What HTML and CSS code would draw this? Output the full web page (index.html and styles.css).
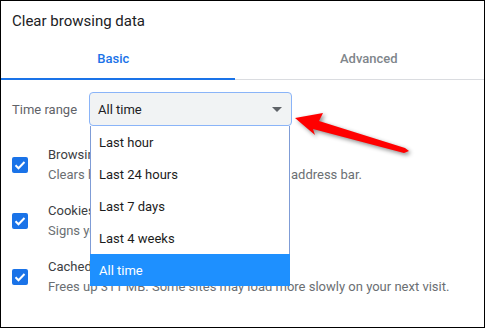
FILE: index.html
```html
<!DOCTYPE html>
<html lang="en">

<head>
    <meta charset="utf-8">
    <meta name="viewport" content="width=device-width, initial-scale=1.0">
    <title>Clear browsing data</title>
    <link rel="stylesheet" href="styles.css">
</head>

<body>

    <div class="dialog">
        <h1 class="titel">Clear browsing data</h1>

        <nav class="faner">
            <div class="fane valgt">Basic</div>
            <div class="fane anden">Advanced</div>
        </nav>

        <section class="indhold">
            <div class="tidsrum">
                <span class="etiket">Time range</span>
                <div class="vaelger">
                    <div class="felt">
                        <span>All time</span>
                        <span class="pil"></span>
                    </div>
                    <ul class="liste">
                        <li>Last hour</li>
                        <li>Last 24 hours</li>
                        <li>Last 7 days</li>
                        <li>Last 4 weeks</li>
                        <li class="markeret">All time</li>
                    </ul>
                </div>
            </div>

            <div class="raekke">
                <span class="boks"><svg viewBox="0 0 16 16" width="16" height="16"><path d="M3.5 8.2l3 3 6-6.2" fill="none" stroke="#fff" stroke-width="2"/></svg></span>
                <div class="tekst">
                    <div class="navn">Browsing history</div>
                    <div class="info">Clears history and autocompletions in the address bar.</div>
                </div>
            </div>

            <div class="raekke">
                <span class="boks"><svg viewBox="0 0 16 16" width="16" height="16"><path d="M3.5 8.2l3 3 6-6.2" fill="none" stroke="#fff" stroke-width="2"/></svg></span>
                <div class="tekst">
                    <div class="navn">Cookies and other site data</div>
                    <div class="info">Signs you out of most sites.</div>
                </div>
            </div>

            <div class="raekke">
                <span class="boks"><svg viewBox="0 0 16 16" width="16" height="16"><path d="M3.5 8.2l3 3 6-6.2" fill="none" stroke="#fff" stroke-width="2"/></svg></span>
                <div class="tekst">
                    <div class="navn">Cached images and files</div>
                    <div class="info">Frees up 311 MB. Some sites may load more slowly on your next visit.</div>
                </div>
            </div>
        </section>
    </div>

    <!-- rød pil oven på skærmbilledet -->
    <svg class="markering" width="489" height="329" viewBox="0 0 489 329">
        <polygon points="295,118 323,113 319,121 405,148 409,151 404,153 313,129 315,135" fill="#ff0000"/>
    </svg>

</body>

</html>
```

FILE: styles.css
```css
body {
    margin: 0;
    padding: 0;
    background-color: white;
    font-family: Roboto, "Liberation Sans", sans-serif;
}

.dialog {
    width: 485px;
    height: 328px;
    box-sizing: border-box;
    border: 1px solid black;
    overflow: hidden;
}

.titel {
    margin: 0;
    height: 39px;
    box-sizing: border-box;
    padding: 10px 0 0 11px;
    font-size: 15px;
    font-weight: normal;
    line-height: 20px;
    color: #202124;
}

.faner {
    display: flex;
    border-bottom: 1px solid #dadce0;
}

.fane {
    height: 38px;
    line-height: 38px;
    font-size: 13px;
    font-weight: 500;
    text-align: center;
    border-bottom: 2px solid transparent;
    margin-bottom: -1px;
    box-sizing: content-box;
}

.valgt {
    width: 225px;
    padding-right: 9px;
    color: #1a73e8;
    border-bottom-color: #1a73e8;
}

.anden {
    width: 231px;
    padding-left: 19px;
    color: #80868b;
}

.indhold {
    padding: 12px 0 0 11px;
}

.tidsrum {
    display: flex;
    align-items: center;
}

.etiket {
    width: 77px;
    font-size: 13px;
    color: #5f6368;
}

.vaelger {
    position: relative;
}

.felt {
    width: 203px;
    height: 34px;
    box-sizing: border-box;
    border: 1px solid #8ab4f8;
    border-radius: 4px;
    background-color: #f1f3f4;
    display: flex;
    align-items: center;
    justify-content: space-between;
    padding: 0 9px 0 8px;
    font-size: 13px;
    color: #202124;
}

.pil {
    width: 0;
    height: 0;
    border-left: 5px solid transparent;
    border-right: 5px solid transparent;
    border-top: 5px solid #5f6368;
}

.liste {
    position: absolute;
    left: 1px;
    top: 34px;
    width: 200px;
    box-sizing: border-box;
    margin: 0;
    padding: 0;
    list-style: none;
    background-color: white;
    border-left: 1px solid #7f9cd6;
    border-right: 1px solid #7f9cd6;
    z-index: 2;
}

.liste li {
    height: 32px;
    line-height: 33px;
    padding-left: 8px;
    font-size: 13px;
    color: #1c1c1c;
}

.liste .markeret {
    background-color: #1e90ff;
    color: white;
    margin: 0 -1px;
    padding-left: 9px;
}

.raekke {
    display: flex;
    align-items: center;
    height: 56px;
}

.tidsrum + .raekke {
    margin-top: 11px;
}

.boks {
    width: 16px;
    height: 16px;
    border-radius: 2px;
    background-color: #1a73e8;
    margin-right: 20px;
    flex-shrink: 0;
}

.boks svg {
    display: block;
}

.tekst {
    font-size: 13px;
    line-height: 20px;
}

.navn {
    color: #3c4043;
}

.info {
    color: #6b6f73;
    white-space: nowrap;
}

.markering {
    position: absolute;
    left: 0;
    top: 0;
    pointer-events: none;
    filter: drop-shadow(2px 2px 2px rgba(0, 0, 0, 0.45));
}
```
